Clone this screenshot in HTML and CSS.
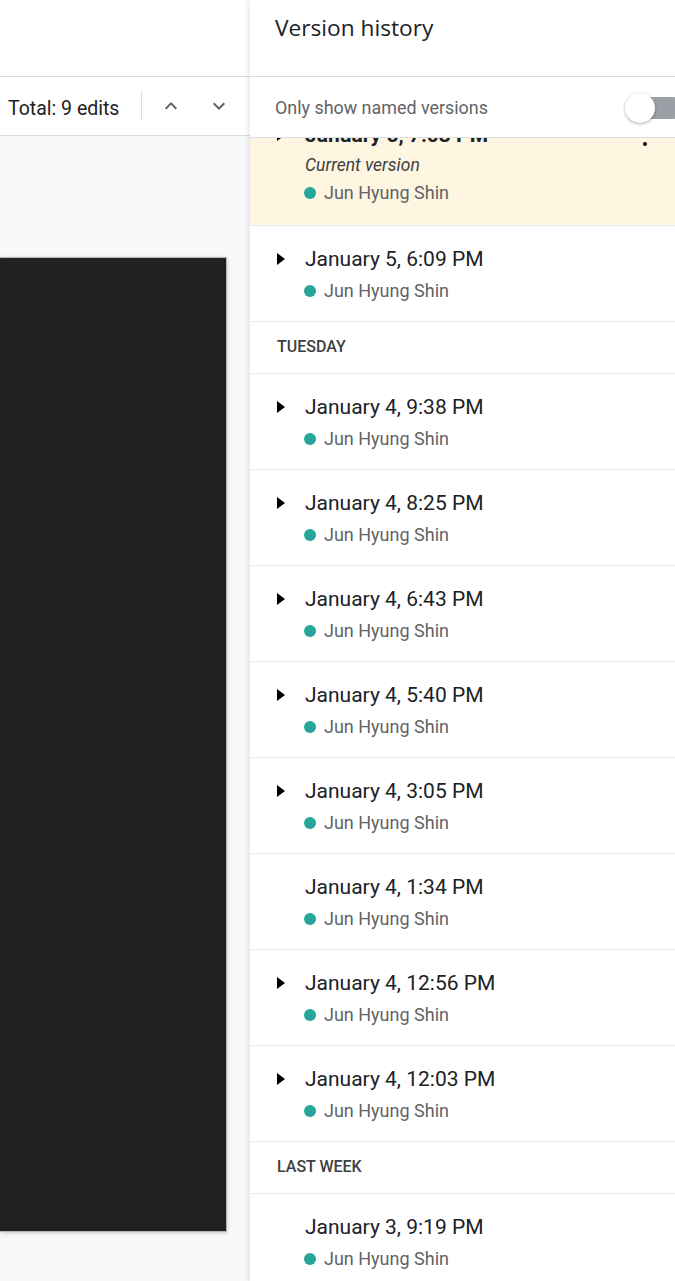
FILE: index.html
```html
<!DOCTYPE html>
<html>
<head>
<meta charset="utf-8">
<link rel="stylesheet" href="styles.css">
</head>
<body>
<div class="main">
  <div class="topbar"></div>
  <div class="toolbar">
    <span class="total">Total: 9 edits</span>
    <span class="divider"></span>
    <svg class="chev chev-up" width="24" height="24" viewBox="0 0 24 24"><path d="M12 8l-6 6 1.41 1.41L12 10.83l4.59 4.58L18 14z" fill="#5f6368"/></svg>
    <svg class="chev chev-down" width="24" height="24" viewBox="0 0 24 24"><path d="M16.59 8.59L12 13.17 7.41 8.59 6 10l6 6 6-6z" fill="#5f6368"/></svg>
  </div>
  <div class="canvas">
    <div class="page"></div>
  </div>
</div>
<div class="panel">
  <div class="panel-head">
    <div class="panel-title">Version history</div>
  </div>
  <div class="filter">
    <span class="filter-label">Only show named versions</span>
    <span class="switch"><span class="thumb"></span></span>
  </div>
  <div class="list">
    <div class="list-inner">
      <div class="item current">
        <span class="caret"></span>
        <div class="body">
          <div class="title-row">
            <span class="title bold">January 5, 7:03 PM</span>
            <svg class="more" width="4" height="20" viewBox="0 0 4 20"><circle cx="2" cy="2" r="2"/><circle cx="2" cy="10" r="2"/><circle cx="2" cy="18" r="2"/></svg>
          </div>
          <div class="cur">Current version</div>
          <div class="who"><span class="dot"></span>Jun Hyung Shin</div>
        </div>
      </div>
      <div class="item">
        <span class="caret"></span>
        <div class="body"><div class="title">January 5, 6:09 PM</div><div class="who"><span class="dot"></span>Jun Hyung Shin</div></div>
      </div>
      <div class="section">TUESDAY</div>
      <div class="item">
        <span class="caret"></span>
        <div class="body"><div class="title">January 4, 9:38 PM</div><div class="who"><span class="dot"></span>Jun Hyung Shin</div></div>
      </div>
      <div class="item">
        <span class="caret"></span>
        <div class="body"><div class="title">January 4, 8:25 PM</div><div class="who"><span class="dot"></span>Jun Hyung Shin</div></div>
      </div>
      <div class="item">
        <span class="caret"></span>
        <div class="body"><div class="title">January 4, 6:43 PM</div><div class="who"><span class="dot"></span>Jun Hyung Shin</div></div>
      </div>
      <div class="item">
        <span class="caret"></span>
        <div class="body"><div class="title">January 4, 5:40 PM</div><div class="who"><span class="dot"></span>Jun Hyung Shin</div></div>
      </div>
      <div class="item">
        <span class="caret"></span>
        <div class="body"><div class="title">January 4, 3:05 PM</div><div class="who"><span class="dot"></span>Jun Hyung Shin</div></div>
      </div>
      <div class="item">
        <span class="caret none"></span>
        <div class="body"><div class="title">January 4, 1:34 PM</div><div class="who"><span class="dot"></span>Jun Hyung Shin</div></div>
      </div>
      <div class="item">
        <span class="caret"></span>
        <div class="body"><div class="title">January 4, 12:56 PM</div><div class="who"><span class="dot"></span>Jun Hyung Shin</div></div>
      </div>
      <div class="item">
        <span class="caret"></span>
        <div class="body"><div class="title">January 4, 12:03 PM</div><div class="who"><span class="dot"></span>Jun Hyung Shin</div></div>
      </div>
      <div class="section">LAST WEEK</div>
      <div class="item">
        <span class="caret none"></span>
        <div class="body"><div class="title">January 3, 9:19 PM</div><div class="who"><span class="dot"></span>Jun Hyung Shin</div></div>
      </div>
    </div>
  </div>
</div>
</body>
</html>
```

FILE: styles.css
```css
* { box-sizing: border-box; }
html, body { margin: 0; padding: 0; }
body {
  width: 675px;
  height: 1281px;
  overflow: hidden;
  display: flex;
  font-family: Roboto, "Liberation Sans", sans-serif;
  background: #fff;
  color: #202124;
}
.main {
  width: 250px;
  flex: none;
  display: flex;
  flex-direction: column;
}
.topbar {
  height: 77px;
  border-bottom: 1px solid #dadce0;
  background: #fff;
}
.toolbar {
  height: 59px;
  border-bottom: 1px solid #dadce0;
  display: flex;
  align-items: center;
  padding-left: 8px;
}
.total {
  font-size: 19.5px;
  color: #202124;
  line-height: 24px;
  padding-top: 5px;
}
.divider {
  width: 1px;
  height: 30px;
  background: #dadce0;
  margin-left: 22px;
}
.chev-up { margin-left: 17px; margin-top: -1px; }
.chev-down { margin-left: 24px; margin-top: -1px; }
.canvas {
  flex: 1;
  background: #f8f9fa;
  padding-top: 121px;
}
.page {
  width: 227px;
  height: 975px;
  background: #212121;
  border: 1px solid #b5b5b5;
  border-left: none;
  box-shadow: 0 1px 4px rgba(60, 64, 67, 0.25);
}
.panel {
  width: 425px;
  flex: none;
  display: flex;
  flex-direction: column;
  background: #fff;
  box-shadow: -2px 0 5px rgba(60, 64, 67, 0.12);
  overflow: hidden;
  position: relative;
  z-index: 1;
}
.panel-head {
  height: 77px;
  border-bottom: 1px solid #dadce0;
  padding: 14px 0 0 25px;
  background: #fff;
  position: relative;
  z-index: 2;
}
.panel-title {
  font-family: "Open Sans", Roboto, sans-serif;
  font-size: 22.7px;
  line-height: 28px;
  color: #202124;
}
.filter {
  height: 61px;
  border-bottom: 1px solid #dadce0;
  display: flex;
  align-items: center;
  justify-content: space-between;
  padding-left: 25px;
  background: #fff;
  position: relative;
  z-index: 2;
}
.filter-label {
  font-size: 17.9px;
  color: #5f6368;
}
.switch {
  position: relative;
  width: 54px;
  height: 22px;
  border-radius: 11px;
  background: #9aa0a6;
  margin-right: -9px;
  margin-top: 2px;
}
.thumb {
  position: absolute;
  left: -5px;
  top: -4px;
  width: 30px;
  height: 30px;
  border-radius: 50%;
  background: #fff;
  box-shadow: 0 1px 3px rgba(0, 0, 0, 0.35);
}
.list {
  flex: 1;
  overflow: hidden;
}
.list-inner {
  margin-top: -36px;
}
.item {
  display: flex;
  padding: 19px 0 18px 27px;
  border-bottom: 1px solid #e8eaed;
}
.item.current {
  background: #fef6e0;
  padding-bottom: 20px;
}
.caret {
  width: 0;
  height: 0;
  margin-top: 8px;
  border-top: 6px solid transparent;
  border-bottom: 6px solid transparent;
  border-left: 8px solid #000;
  flex: none;
}
.caret.none { border-left-color: transparent; }
.body {
  flex: 1;
  margin-left: 20px;
}
.title-row {
  display: flex;
  justify-content: space-between;
  align-items: flex-start;
}
.more {
  margin-right: 28px;
  margin-top: 5px;
  fill: #000;
}
.title {
  font-size: 21px;
  line-height: 28px;
  color: #202124;
  display: block;
}
.title.bold { font-weight: 700; }
.cur {
  margin-top: 4px;
  font-size: 17.5px;
  line-height: 24px;
  font-style: italic;
  color: #3c4043;
}
.who {
  margin-top: 6px;
  font-size: 18px;
  line-height: 24px;
  color: #5f6368;
  display: flex;
  align-items: center;
  margin-left: -1px;
}
.current .who { margin-top: 4px; }
.dot {
  width: 12px;
  height: 12px;
  border-radius: 50%;
  background: #26a69a;
  margin-right: 8px;
  flex: none;
}
.section {
  height: 52px;
  border-bottom: 1px solid #e8eaed;
  padding-left: 27px;
  display: flex;
  align-items: center;
  font-size: 16px;
  font-weight: 500;
  color: #3c4043;
  padding-bottom: 2px;
}
```
